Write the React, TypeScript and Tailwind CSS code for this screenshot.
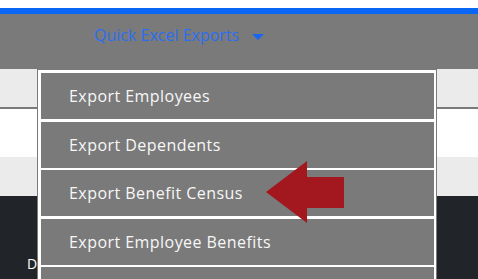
import React from 'react'

const items = [
  'Export Employees',
  'Export Dependents',
  'Export Benefit Census',
  'Export Employee Benefits',
  '',
]

// white gaps between menu rows (the screenshot alternates 3px / 2px)
const gaps = ['mt-[3px]', 'mt-[2px]', 'mt-[3px]', 'mt-[2px]']

export default function App() {
  return (
    <div className="relative w-[478px] h-[279px] overflow-hidden bg-white font-['Open_Sans',sans-serif]">
      <div className="h-[8px] bg-white" />
      <div className="h-[6px] bg-[#0a66f5]" />

      {/* Header */}
      <header className="h-[55px] bg-[#7a7a7a] pl-[94px] pt-[9px]">
        <div className="flex items-center text-[16px] leading-[24px] text-[#2a6ef2]">
          <span>Quick Excel Exports</span>
          <span className="ml-[13px] mt-[4px] h-0 w-0 border-l-[6px] border-r-[6px] border-t-[6px] border-l-transparent border-r-transparent border-t-[#1767f0]" />
        </div>
      </header>

      {/* Page rows behind the menu */}
      <div className="flex flex-col h-[210px]">
        <div className="h-[38px] bg-[#ebebeb] border-b-2 border-[#7a7a7a] box-content" />
        <div className="h-[48px] bg-white" />
        <div className="h-[39px] bg-[#ebebeb]" />
        <div className="flex-1 bg-[#212529] pl-[27px] pt-[55px]">
          <span className="text-[14px] leading-[16px] text-white">Dashboard</span>
        </div>
      </div>

      {/* Dropdown menu */}
      <div className="absolute left-[37px] top-[69px] w-[400px] bg-[#7a7a7a] px-[1px] pt-[1px]">
        <div className="bg-white pl-[3px] pr-[2px] pt-[3px] pb-[2px]">
          {items.map((label, i) => (
            <div
              key={i}
              className={`flex h-[46px] items-center bg-[#7a7a7a] pl-[28px] text-[16px] tracking-[0.45px] text-[#f7f7f7] ${i > 0 ? gaps[i - 1] : ''}`}
            >
              {label}
            </div>
          ))}
        </div>
      </div>

      {/* Red pointer arrow */}
      <svg className="absolute left-0 top-0" width="478" height="279" viewBox="0 0 478 279">
        <polygon points="266,192 307,161 307,177 344,177 344,208 307,208 307,223" fill="#a3171f" />
      </svg>
    </div>
  )
}
